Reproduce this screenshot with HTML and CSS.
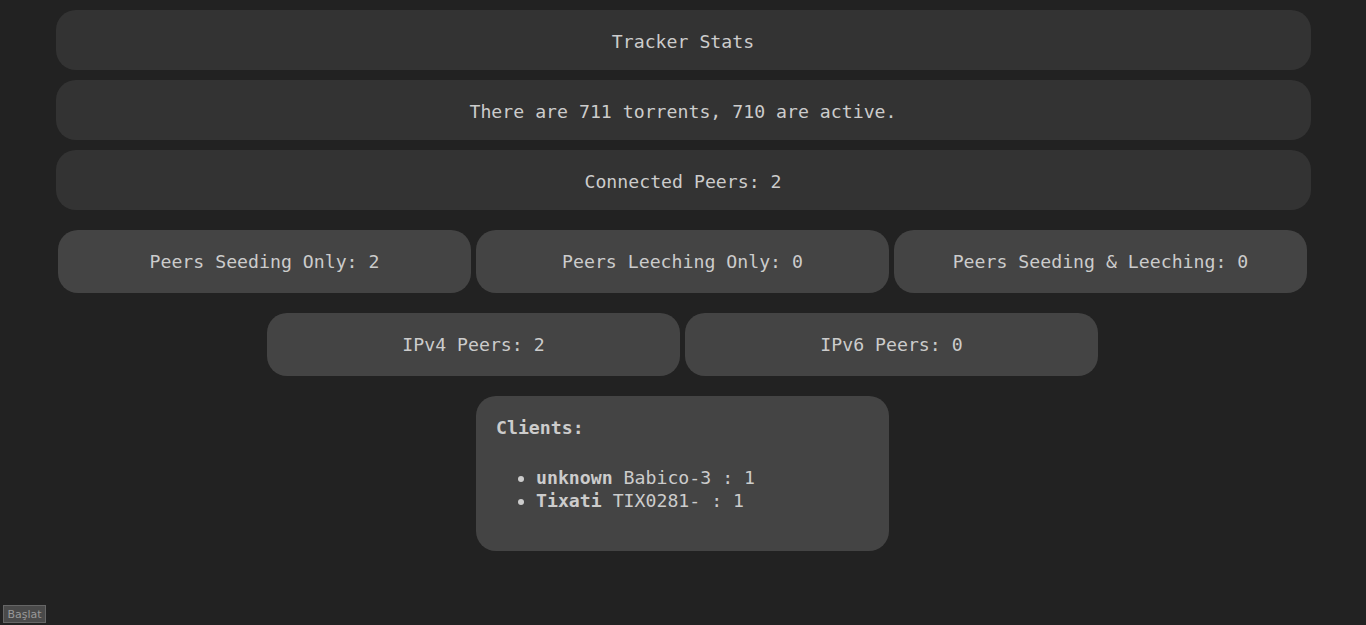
FILE: index.html
```html
<!DOCTYPE html>
<html>
<head>
  <meta charset="UTF-8">
  <title>Tracker Stats</title>
  <link rel="stylesheet" href="styles.css">
</head>
<body>
  <div class="page">
    <div class="bar">Tracker Stats</div>
    <div class="bar">There are 711 torrents, 710 are active.</div>
    <div class="bar">Connected Peers: 2</div>

    <div class="row">
      <div class="stat">Peers Seeding Only: 2</div>
      <div class="stat">Peers Leeching Only: 0</div>
      <div class="stat">Peers Seeding &amp; Leeching: 0</div>
    </div>

    <div class="row">
      <div class="stat">IPv4 Peers: 2</div>
      <div class="stat">IPv6 Peers: 0</div>
    </div>

    <div class="row">
      <div class="clients">
        <b>Clients:</b>
        <ul>
          <li><b>unknown</b> Babico-3 : 1</li>
          <li><b>Tixati</b> TIX0281- : 1</li>
        </ul>
      </div>
    </div>
  </div>

  <button class="start">Başlat</button>
</body>
</html>
```

FILE: styles.css
```css
html, body {
  margin: 0;
  padding: 0;
  height: 100%;
}

body {
  background-color: #222;
  color: #ccc;
  font-family: 'DejaVu Sans Mono', monospace;
  font-size: 18.2px;
  line-height: 23px;
}

.page {
  width: 1255px;
  margin: 0 auto;
  padding-top: 10px;
  display: flex;
  flex-direction: column;
  gap: 10px;
}

.bar {
  background-color: #333;
  border-radius: 20px;
  text-align: center;
  padding: 20px 0 17px;
}

.row {
  display: flex;
  justify-content: center;
  gap: 5px;
  margin-top: 10px;
  padding-right: 1px;
}

.stat {
  width: 413px;
  background-color: #444;
  border-radius: 20px;
  text-align: center;
  padding: 20px 0;
}

.clients {
  width: 393px;
  height: 115px;
  background-color: #444;
  border-radius: 20px;
  padding: 20px 0 20px 20px;
}

.clients ul {
  margin: 27px 0 0;
  padding-left: 40px;
}

.start {
  position: fixed;
  left: 3px;
  bottom: 2px;
  width: 43px;
  height: 18px;
  padding: 0;
  background-color: #4a4a4a;
  color: #999;
  border: 1px solid #666;
  font-family: 'DejaVu Sans', sans-serif;
  font-size: 11px;
}
```
